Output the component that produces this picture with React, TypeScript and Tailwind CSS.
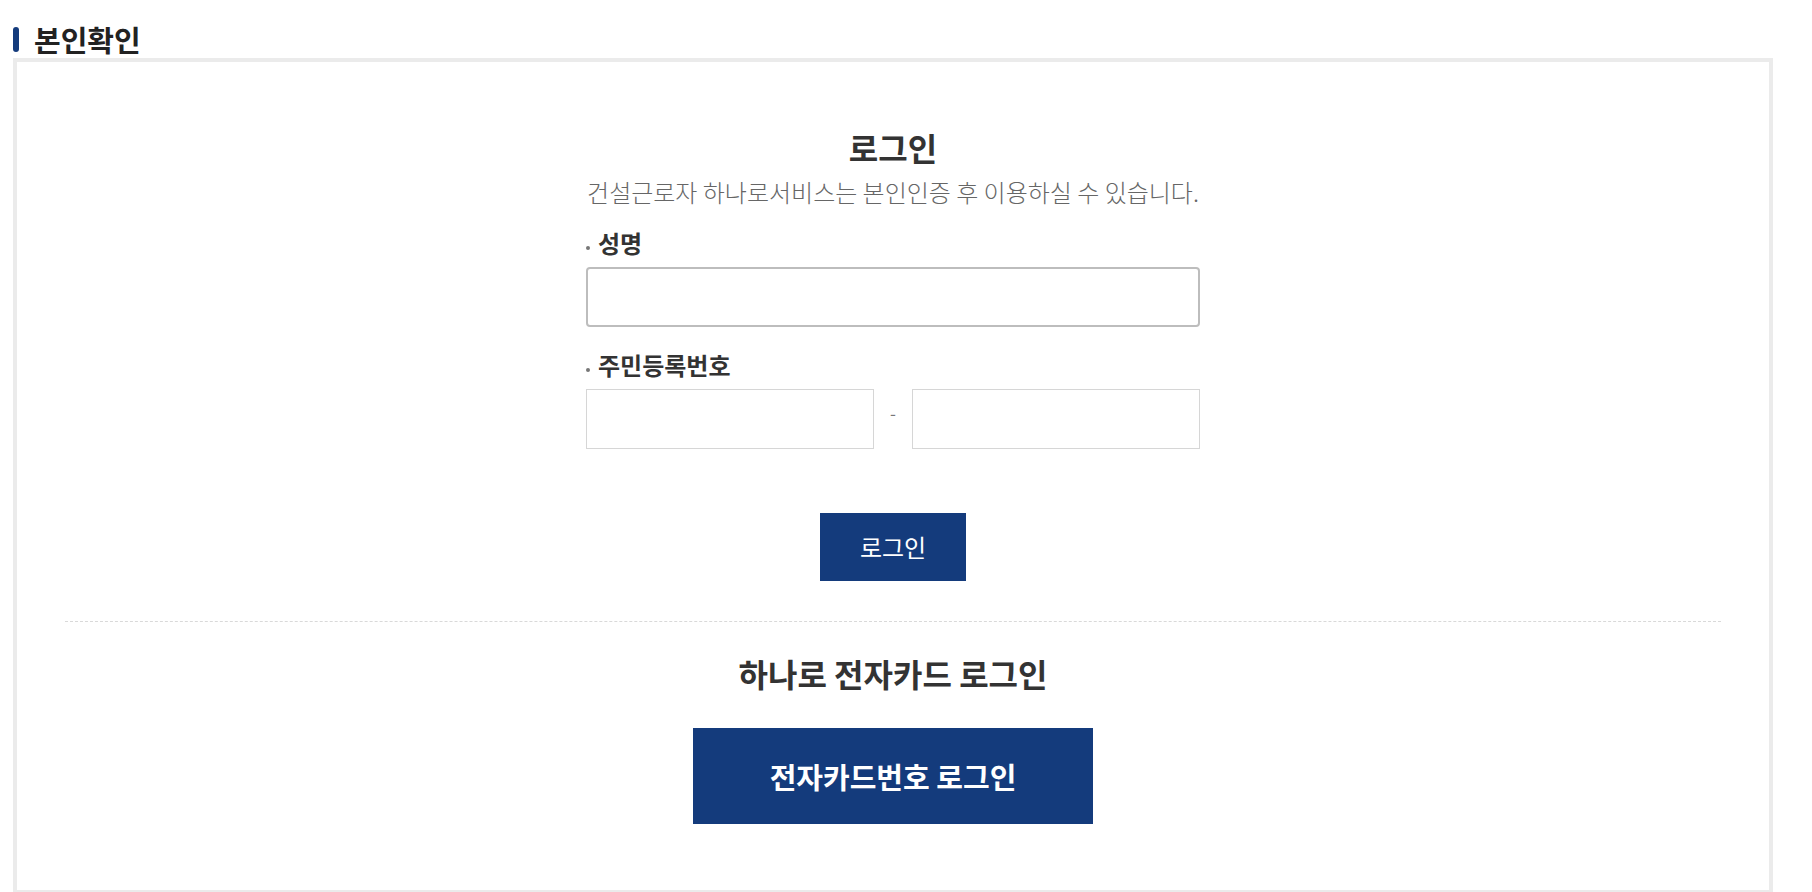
import React from "react";

export default function App() {
  return (
    <div className="min-h-[892px] w-full bg-white font-['Noto_Sans_CJK_KR','Noto_Sans',sans-serif] text-[#333]">
      <div className="pl-[13px] pr-[39px]">
        <div className="flex h-[58px] items-start pt-[21px]">
          <div className="flex items-center">
            <span className="mt-[1px] h-[25px] w-[6px] rounded-[3px] bg-[#143b7c]" />
            <h2 className="ml-[15px] text-[29px] font-bold leading-[36px] text-[#222]">본인확인</h2>
          </div>
        </div>
        <div className="border-4 border-[#ebebeb] bg-white px-[48px] pb-[66px] pt-[67px]">
          <div className="mx-auto flex w-[614px] flex-col">
            <h3 className="text-center text-[32px] font-bold leading-[36px] text-[#333]">로그인</h3>
            <p className="mt-[12px] text-center text-[24px] font-light leading-[30px] text-[#666]">
              건설근로자 하나로서비스는 본인인증 후 이용하실 수 있습니다.
            </p>
            <label className="mt-[21px] flex items-center text-[24px] font-bold leading-[30px] text-[#333]">
              <span className="mr-[8px] mt-[10px] h-[4px] w-[4px] rounded-full bg-[#777]" />
              성명
            </label>
            <input
              type="text"
              className="mt-[9px] h-[60px] w-full rounded-[4px] border-2 border-[#bdbdbd] bg-white px-3 outline-none"
            />
            <label className="mt-[23px] flex items-center text-[24px] font-bold leading-[30px] text-[#333]">
              <span className="mr-[8px] mt-[10px] h-[4px] w-[4px] rounded-full bg-[#777]" />
              주민등록번호
            </label>
            <div className="mt-[9px] flex items-center">
              <input
                type="text"
                className="h-[60px] min-w-0 flex-1 border border-[#d6d6d6] bg-white px-3 outline-none"
              />
              <span className="w-[38px] pb-[12px] text-center text-[17px] leading-[20px] text-[#777]">-</span>
              <input
                type="text"
                className="h-[60px] min-w-0 flex-1 border border-[#d6d6d6] bg-white px-3 outline-none"
              />
            </div>
            <div className="mt-[64px] flex justify-center">
              <button className="h-[68px] w-[146px] bg-[#143b7c] text-[24px] leading-[30px] text-white">로그인</button>
            </div>
          </div>
          <div className="mt-[40px] border-t border-dashed border-[#d9d9d9]" />
          <h3 className="mt-[31px] text-center text-[32px] font-bold leading-[40px] text-[#333]">하나로 전자카드 로그인</h3>
          <div className="mt-[35px] flex justify-center">
            <button className="h-[96px] w-[400px] bg-[#143b7c] text-[29px] font-bold leading-[36px] text-white">
              전자카드번호 로그인
            </button>
          </div>
        </div>
      </div>
    </div>
  );
}
